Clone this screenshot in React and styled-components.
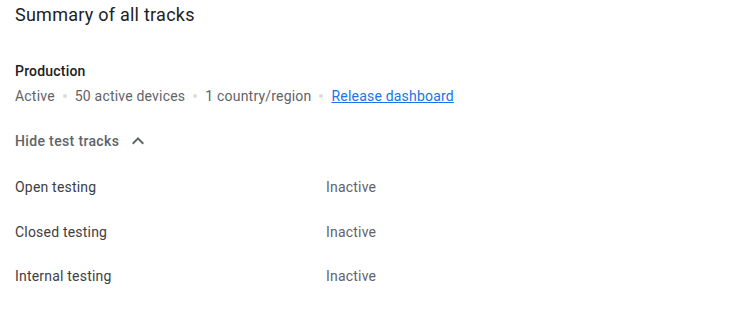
import React from "react";
import styled, { createGlobalStyle } from "styled-components";

const GlobalStyle = createGlobalStyle`
  body {
    margin: 0;
    background: #fff;
    font-family: Roboto, "Liberation Sans", sans-serif;
  }
`;

const Page = styled.div`
  padding: 3px 15px 0;
  color: #202124;
`;

const Title = styled.h2`
  margin: 0;
  font-size: 18px;
  font-weight: 400;
  line-height: 24px;
  letter-spacing: 0.25px;
  color: #202124;
`;

const Section = styled.div`
  margin-top: 34px;
`;

const Label = styled.div`
  font-size: 14px;
  font-weight: 500;
  line-height: 20px;
  letter-spacing: 0.2px;
  color: #202124;
`;

const Meta = styled.div`
  display: flex;
  align-items: center;
  margin-top: 5px;
  font-size: 14px;
  line-height: 20px;
  letter-spacing: 0.2px;
  color: #5f6368;
`;

const Dot = styled.span`
  width: 4px;
  height: 4px;
  border-radius: 50%;
  background: #dadce0;
  margin: 0 8px;
`;

const Link = styled.a`
  color: #1a73e8;
  text-decoration: underline;
  cursor: pointer;
`;

const Toggle = styled.button`
  display: flex;
  align-items: center;
  gap: 7px;
  height: 20px;
  margin-top: 25px;
  padding: 0;
  border: none;
  background: none;
  font-family: inherit;
  font-size: 14px;
  font-weight: 500;
  line-height: 20px;
  letter-spacing: 0.35px;
  color: #5f6368;
  cursor: pointer;
`;

const Tracks = styled.div`
  margin-top: 26px;
  display: grid;
  grid-template-columns: 311px 1fr;
  row-gap: 24.5px;
  font-size: 14px;
  line-height: 20px;
  letter-spacing: 0.2px;
  color: #5f6368;
`;

const TrackName = styled.div`
  color: #3c4043;
`;

const tracks = ["Open testing", "Closed testing", "Internal testing"];

export default function App() {
  return (
    <>
      <GlobalStyle />
      <Page>
        <Title>Summary of all tracks</Title>
        <Section>
          <Label>Production</Label>
          <Meta>
            <span>Active</span>
            <Dot />
            <span>50 active devices</span>
            <Dot />
            <span>1 country/region</span>
            <Dot />
            <Link>Release dashboard</Link>
          </Meta>
        </Section>
        <Toggle>
          Hide test tracks
          <svg width="24" height="24" viewBox="0 0 24 24" fill="#5f6368">
            <path d="M7.41 15.41 12 10.83l4.59 4.58L18 14l-6-6-6 6z" />
          </svg>
        </Toggle>
        <Tracks>
          {tracks.map((t) => (
            <React.Fragment key={t}>
              <TrackName>{t}</TrackName>
              <div>Inactive</div>
            </React.Fragment>
          ))}
        </Tracks>
      </Page>
    </>
  );
}
